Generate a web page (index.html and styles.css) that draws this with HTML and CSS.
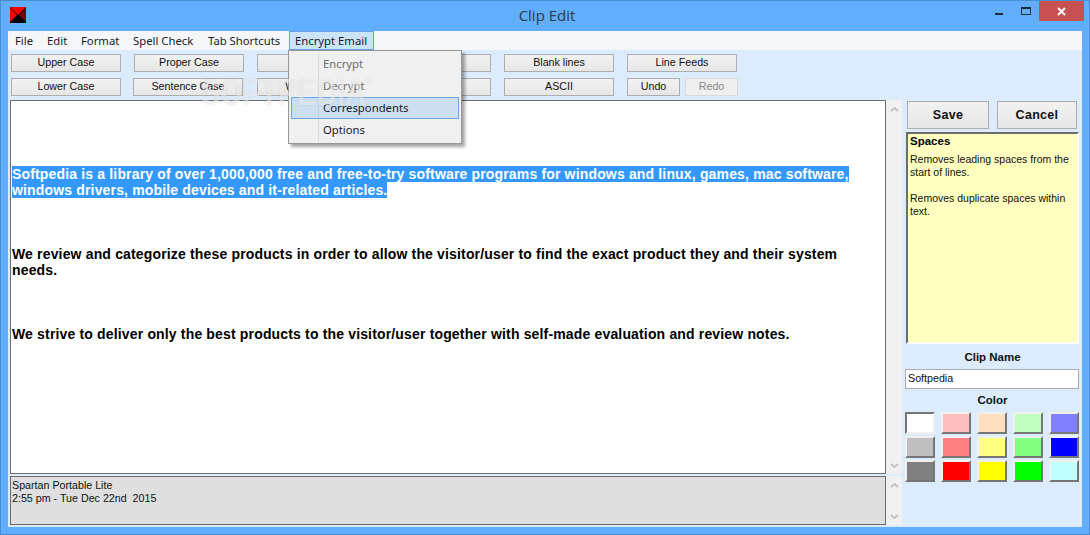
FILE: index.html
```html
<!DOCTYPE html>
<html lang="en">
<head>
<meta charset="utf-8">
<title>Clip Edit</title>
<link rel="stylesheet" href="styles.css">
</head>
<body>
<div class="window">
  <header class="titlebar">
    <svg class="app-icon" width="16" height="16" viewBox="0 0 16 16"><rect width="16" height="16" fill="#000"/><path d="M0 0H16L8 8Z" fill="#f00"/><path d="M0 1L7 8L0 15Z" fill="#f00"/><path d="M16 1V15L9 8Z" fill="#700"/></svg>
    <div class="title">Clip Edit</div>
    <div class="controls">
      <span class="ctl ctl-min"><i class="min-glyph"></i></span>
      <span class="ctl ctl-max"><i class="max-glyph"></i></span>
      <span class="ctl ctl-close"><svg width="9" height="9" viewBox="0 0 9 9"><path d="M1 1L8 8M8 1L1 8" stroke="#fff" stroke-width="2"/></svg></span>
    </div>
  </header>
  <div class="client">
    <nav class="menubar">
      <span class="menu-item mi-file">File</span>
      <span class="menu-item mi-edit">Edit</span>
      <span class="menu-item mi-format">Format</span>
      <span class="menu-item mi-spell">Spell Check</span>
      <span class="menu-item mi-tab">Tab Shortcuts</span>
      <span class="menu-item mi-encrypt">Encrypt Email</span>
    </nav>
    <div class="toolbar">
      <button class="btn">Upper Case</button>
      <button class="btn">Proper Case</button>
      <button class="btn"></button>
      <button class="btn"></button>
      <button class="btn">Blank lines</button>
      <button class="btn">Line Feeds</button>
      <button class="btn">Lower Case</button>
      <button class="btn btn-shift">Sentence Case</button>
      <button class="btn">Word Wrap</button>
      <button class="btn"></button>
      <button class="btn">ASCII</button>
      <div class="undo-group">
        <button class="btn btn-small">Undo</button>
        <button class="btn btn-small btn-disabled">Redo</button>
      </div>
    </div>
    <main class="main">
      <section class="left">
        <div class="scroll-pane editor-pane">
          <div class="editor">
            <p class="para para-first"><span class="sel">Softpedia is a library of over 1,000,000 free and free-to-try software programs for windows and linux, games, mac software,<br>windows drivers, mobile devices and it-related articles.</span></p>
            <p class="para">We review and categorize these products in order to allow the visitor/user to find the exact product they and their system<br>needs.</p>
            <p class="para">We strive to deliver only the best products to the visitor/user together with self-made evaluation and review notes.</p>
          </div>
          <div class="scrollbar">
            <svg width="9" height="7" viewBox="0 0 9 7"><path d="M1 5L4.500 2L8 5" fill="none" stroke="#c2c2c2" stroke-width="2"/></svg>
            <svg width="9" height="7" viewBox="0 0 9 7"><path d="M1 2L4.500 5L8 2" fill="none" stroke="#c2c2c2" stroke-width="2"/></svg>
          </div>
        </div>
        <div class="scroll-pane status-pane">
          <div class="status">Spartan Portable Lite<br>2:55 pm - Tue Dec 22nd&nbsp; 2015</div>
          <div class="scrollbar">
            <svg width="9" height="7" viewBox="0 0 9 7"><path d="M1 5L4.500 2L8 5" fill="none" stroke="#c2c2c2" stroke-width="2"/></svg>
            <svg width="9" height="7" viewBox="0 0 9 7"><path d="M1 2L4.500 5L8 2" fill="none" stroke="#c2c2c2" stroke-width="2"/></svg>
          </div>
        </div>
      </section>
      <aside class="side">
        <div class="actions">
          <button class="btn action">Save</button>
          <button class="btn action">Cancel</button>
        </div>
        <div class="help">
          <h2 class="help-title">Spaces</h2>
          <p class="help-text">Removes leading spaces from the start of lines.</p>
          <p class="help-text help-gap">Removes duplicate spaces within text.</p>
        </div>
        <div class="label label-name">Clip Name</div>
        <input class="name-input" type="text" value="Softpedia">
        <div class="label label-color">Color</div>
        <div class="swatches">
          <span class="swatch swatch-selected c-white"></span>
          <span class="swatch c-pink"></span>
          <span class="swatch c-peach"></span>
          <span class="swatch c-lgreen"></span>
          <span class="swatch c-periw"></span>
          <span class="swatch c-silver"></span>
          <span class="swatch c-salmon"></span>
          <span class="swatch c-lyellow"></span>
          <span class="swatch c-mgreen"></span>
          <span class="swatch c-blue"></span>
          <span class="swatch c-gray"></span>
          <span class="swatch c-red"></span>
          <span class="swatch c-yellow"></span>
          <span class="swatch c-green"></span>
          <span class="swatch c-cyan"></span>
        </div>
      </aside>
    </main>
  </div>
  <div class="dropdown">
    <div class="dd-item dd-disabled">Encrypt</div>
    <div class="dd-item dd-disabled">Decrypt</div>
    <div class="dd-item dd-active">Correspondents</div>
    <div class="dd-item">Options</div>
  </div>
  <div class="watermark">SOFTPEDIA<sup class="reg">®</sup></div>
</div>
</body>
</html>
```

FILE: styles.css
```css
* { box-sizing: border-box; }
html, body { margin: 0; padding: 0; }
body { width: 1090px; height: 535px; overflow: hidden; font-family: "Liberation Sans", Arial, sans-serif; }
button, input { font-family: inherit; margin: 0; }
p, h2 { margin: 0; }

.window { position: relative; width: 1090px; height: 535px; background: #60aefd; border: 1px solid #4a8fd0; display: flex; flex-direction: column; }

.titlebar { height: 30px; flex: none; display: flex; align-items: flex-start; padding-left: 9px; position: relative; }
.app-icon { margin-top: 6px; flex: none; }
.title { position: absolute; left: 4px; right: 0; top: 5px; text-align: center; font: 15px/18px "Open Sans", sans-serif; color: #2f3a45; }
.controls { margin-left: auto; display: flex; margin-right: 5px; position: relative; }
.ctl { display: flex; align-items: center; justify-content: center; height: 20px; }
.ctl-min { width: 26px; margin-right: 1px; }
.ctl-max { width: 26px; }
.ctl-close { width: 45px; background: #c75050; }
.min-glyph { display: block; width: 8px; height: 2px; background: #1a2a3a; margin-top: 6px; }
.max-glyph { display: block; width: 10px; height: 8px; border: 1px solid #1a2a3a; border-top-width: 2px; }

.client { margin: 0 7px; height: 496px; background: #dcebfe; display: flex; flex-direction: column; }

.menubar { height: 19px; flex: none; background: #f5f6f7; position: relative; font: 11.300px/19px "Noto Sans", sans-serif; color: #1a1a2a; display: flex; }
.menu-item { display: block; }
.mi-file { margin-left: 7px; width: 32px; }
.mi-edit { width: 34px; }
.mi-format { width: 52px; }
.mi-spell { width: 75px; }
.mi-tab { width: 81px; }
.mi-encrypt { width: 85px; height: 19px; padding-left: 5px; background: #cce4f7; border: 1px solid #62a2e4; line-height: 17px; }

.toolbar { height: 50px; flex: none; padding: 4px 0 0 3px; display: grid; grid-template-columns: 123px 123px 124px 123px 123px 120px; grid-auto-rows: 18px; row-gap: 6px; }

.btn { display: block; width: 110px; height: 18px; padding: 0 0 1px; border: 1px solid #adadad; background: linear-gradient(#f2f2f2, #e6e6e6); color: #111; font-size: 10.700px; line-height: 15px; text-align: center; }
.btn-shift { margin-left: -1px; }
.undo-group { display: flex; gap: 5px; }
.btn-small { width: 53px; }
.btn-disabled { color: #8a8a8a; border-color: #d9d9d9; background: #efefef; }

.main { flex: 1; display: flex; min-height: 0; }
.left { width: 892px; margin-left: 2px; flex: none; display: flex; flex-direction: column; gap: 2px; }
.scroll-pane { display: flex; }
.editor-pane { height: 374px; }
.status-pane { height: 49px; }
.editor { flex: 1; background: #fff; border: 1px solid #6d6d6d; padding-top: 1px; padding-left: 1px; font-size: 14px; line-height: 16px; font-weight: 700; color: #000; white-space: nowrap; overflow: hidden; }
.para { margin-top: 48px; letter-spacing: 0.160px; }
.para-first { margin-top: 64px; }
.sel { background: #3399ff; color: #fff; }
.status { flex: 1; background: #dfdfdf; border: 1px solid #6d6d6d; padding: 2px 1px 0; font-size: 10.700px; line-height: 13px; color: #111; }
.scrollbar { width: 16px; flex: none; background: #f0f0f0; display: flex; flex-direction: column; justify-content: space-between; align-items: center; padding: 6px 0 5px; }

.side { width: 173px; margin-left: 4px; flex: none; position: relative; }
.actions { display: flex; gap: 8px; padding: 1px 0 0 1px; }
.action { width: 82px; height: 28px; padding: 0; font-weight: 700; font-size: 12.500px; letter-spacing: 0.300px; }
.action + .action { width: 80px; }
.help { margin-top: 3px; height: 212px; width: 173px; background: #ffffc0; border: 2px solid; border-color: #6d6d6d #fff #fff #6d6d6d; padding: 1px 2px; font-size: 10.500px; line-height: 13px; color: #111; }
.help-title { font-size: 11.500px; line-height: 13px; font-weight: 700; margin-bottom: 5px; color: #000; }
.help-gap { margin-top: 13px; }
.label { text-align: center; font-size: 11.500px; line-height: 14px; font-weight: 700; color: #111; }
.label-name { margin-top: 6px; }
.label-color { margin-top: 4px; }
.name-input { display: block; margin: 5px 0 0 -1px; width: 174px; height: 20px; border: 1px solid #abadb3; background: #fff; padding: 0 2px 2px; font-size: 10.700px; color: #111; outline: none; }
.swatches { display: grid; grid-template-columns: repeat(5, 30px); grid-auto-rows: 22px; column-gap: 6px; row-gap: 2px; margin: 5px 0 0 -1px; }
.swatch { display: block; border: 2px solid; border-color: #f0f0f0 #767676 #767676 #f0f0f0; }
.swatch-selected { border-color: #767676 #f0f0f0 #f0f0f0 #767676; }
.c-white { background: #fff; }
.c-pink { background: #ffbfbf; }
.c-peach { background: #ffdfbf; }
.c-lgreen { background: #bfffbf; }
.c-periw { background: #8080ff; }
.c-silver { background: #bfbfbf; }
.c-salmon { background: #ff8080; }
.c-lyellow { background: #ffff80; }
.c-mgreen { background: #80ff80; }
.c-blue { background: #0000ff; }
.c-gray { background: #808080; }
.c-red { background: #ff0000; }
.c-yellow { background: #ffff00; }
.c-green { background: #00ff00; }
.c-cyan { background: #bfffff; }

.dropdown { position: absolute; left: 287px; top: 49px; width: 174px; height: 94px; background: #f0f0f0; border: 1px solid #979797; box-shadow: 3px 3px 3px rgba(0,0,0,.35); padding: 2px; font: 11.300px/22px "Noto Sans", sans-serif; color: #1a1a2a; }
.dropdown::before { content: ""; position: absolute; left: 29px; top: 2px; bottom: 2px; width: 1px; background: #d7d7d7; }
.dd-item { height: 22px; padding-left: 32px; position: relative; }
.dd-disabled { color: #6d6d6d; }
.dd-active { background: rgba(160,200,240,.45); border: 1px solid #6aa6e8; line-height: 20px; padding-left: 31px; }

.watermark { position: absolute; left: 200px; top: 74px; font-size: 36px; line-height: 36px; font-weight: 700; color: rgba(255,255,255,.5); text-shadow: 0 0 2px rgba(0,0,0,.12); pointer-events: none; transform: scaleX(.8); transform-origin: left center; }
.reg { font-size: 11px; vertical-align: 20px; line-height: 0; }
```
